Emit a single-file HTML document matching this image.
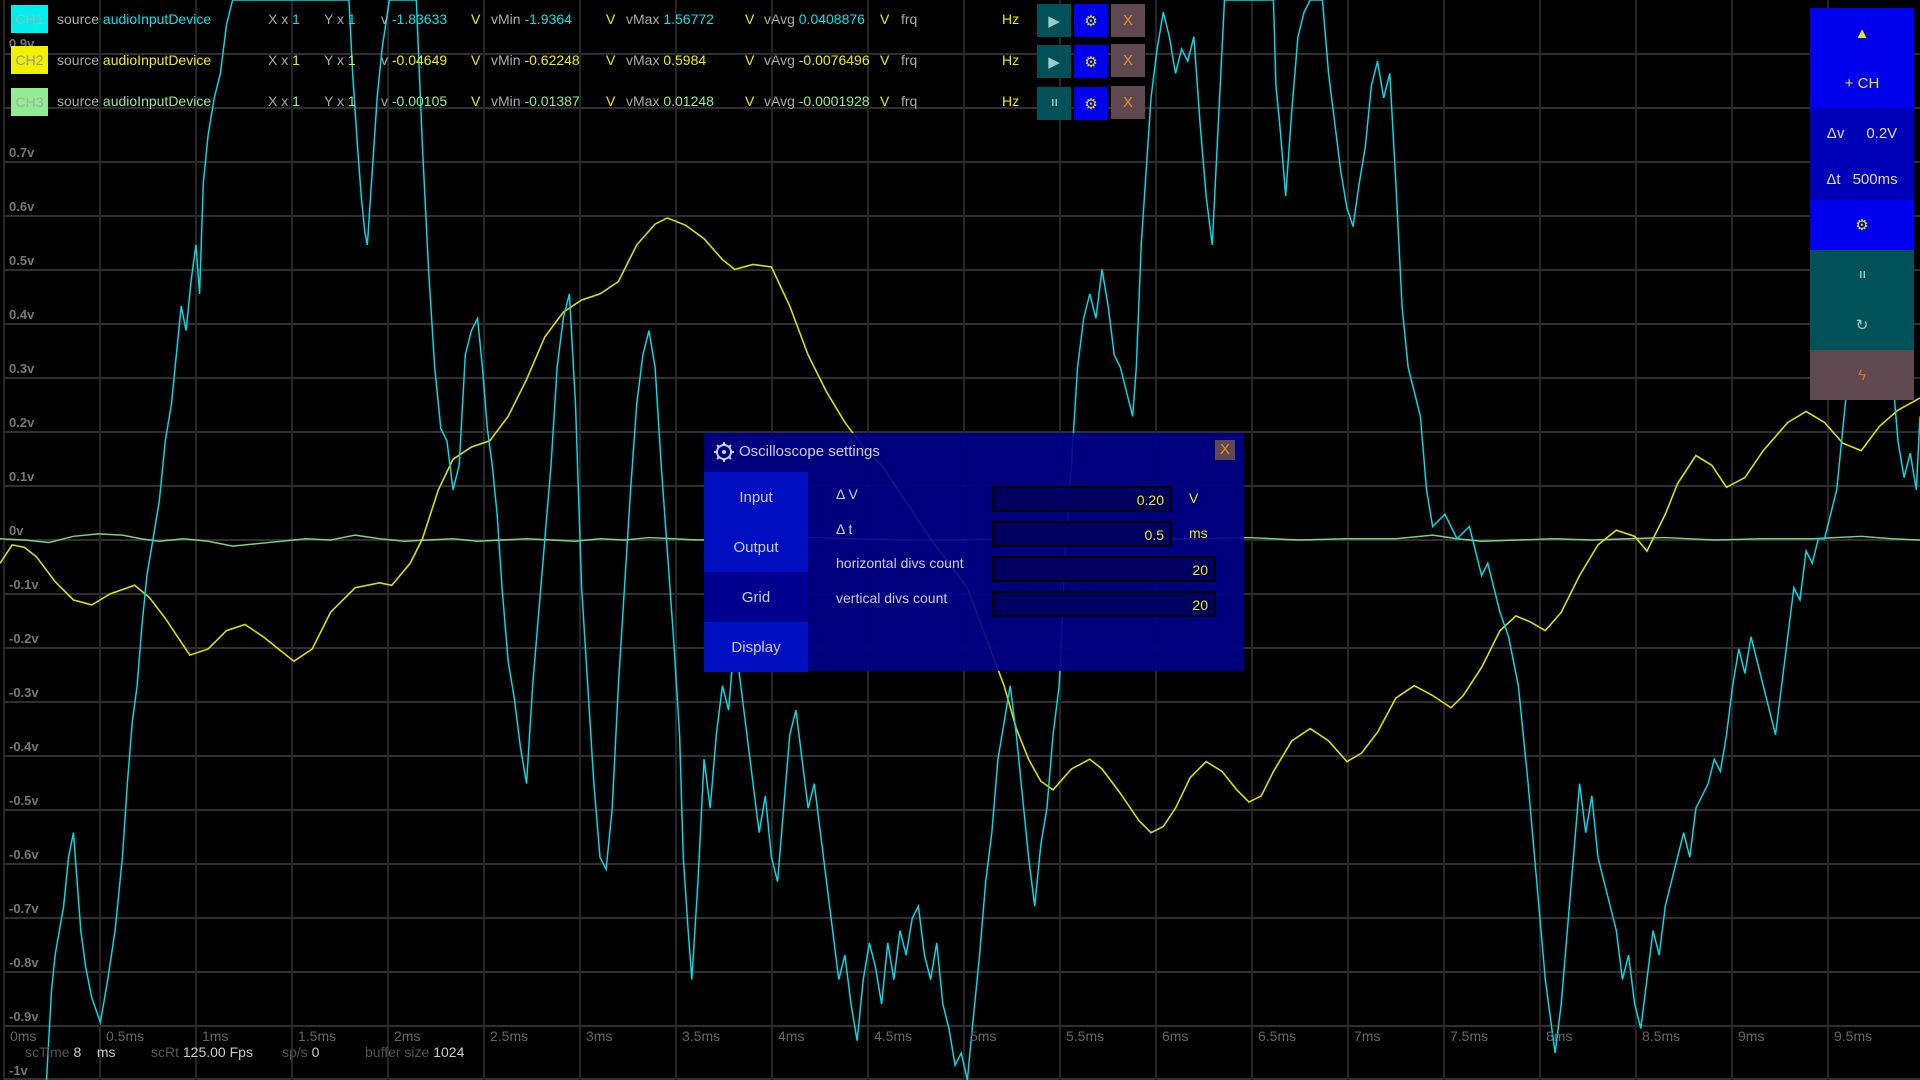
<!DOCTYPE html>
<html><head><meta charset="utf-8"><style>
*{margin:0;padding:0;box-sizing:border-box}
body{width:1920px;height:1080px;background:#000;overflow:hidden;position:relative;font-family:"Liberation Sans",sans-serif;color:#aaa}
.ab{position:absolute;white-space:nowrap}
.yl{position:absolute;left:9px;font-size:13px;font-weight:bold;color:#777}
.tl{position:absolute;top:1028px;font-size:14px;color:#666}
.hd{position:absolute;font-size:14px;color:#aaa;white-space:nowrap}
.c1{color:#00e5ee}.c2{color:#f0f000}.c3{color:#90ee90}.y{color:#f0f000}
.btn{position:absolute;width:34px;height:33px;display:flex;align-items:center;justify-content:center;font-size:15px}
.pl{background:#005258;color:#9cc}.gr{background:#0000ee;color:#e0e000}.xx{background:#604850;color:#e09020}
.ps{font-size:10px;font-weight:bold;letter-spacing:-1px}
.rp{position:absolute;left:1810px;width:104px;display:flex;align-items:center;justify-content:center;font-size:15px;color:#ddd}
.dlg{position:absolute;left:704px;top:433px;width:540px;height:238px;background:rgba(0,0,140,0.9)}
.tab{position:absolute;left:0;width:104px;height:50px;display:flex;align-items:center;justify-content:center;font-size:15px;color:#ccd}
.lab{position:absolute;left:132px;font-size:14px;color:#ccd}
.inp{position:absolute;left:288px;height:26px;background:#000060;border:2px solid #000;color:#f0f000;font-size:14px;text-align:right;padding:4px 6px}
</style></head><body>
<svg class="ab" style="left:0;top:0" width="1920" height="1080">
<g stroke="#303030" stroke-width="2">
<line x1="4" y1="54" x2="1920" y2="54"/><line x1="4" y1="108" x2="1920" y2="108"/><line x1="4" y1="162" x2="1920" y2="162"/><line x1="4" y1="216" x2="1920" y2="216"/><line x1="4" y1="270" x2="1920" y2="270"/><line x1="4" y1="324" x2="1920" y2="324"/><line x1="4" y1="378" x2="1920" y2="378"/><line x1="4" y1="432" x2="1920" y2="432"/><line x1="4" y1="486" x2="1920" y2="486"/><line x1="4" y1="540" x2="1920" y2="540"/><line x1="4" y1="594" x2="1920" y2="594"/><line x1="4" y1="648" x2="1920" y2="648"/><line x1="4" y1="702" x2="1920" y2="702"/><line x1="4" y1="756" x2="1920" y2="756"/><line x1="4" y1="810" x2="1920" y2="810"/><line x1="4" y1="864" x2="1920" y2="864"/><line x1="4" y1="918" x2="1920" y2="918"/><line x1="4" y1="972" x2="1920" y2="972"/><line x1="4" y1="1026" x2="1920" y2="1026"/><line x1="4" y1="1079" x2="1920" y2="1079"/>
</g>
<g stroke="#262626" stroke-width="2">
<line x1="4" y1="0" x2="4" y2="1080"/><line x1="100" y1="0" x2="100" y2="1080"/><line x1="196" y1="0" x2="196" y2="1080"/><line x1="292" y1="0" x2="292" y2="1080"/><line x1="388" y1="0" x2="388" y2="1080"/><line x1="484" y1="0" x2="484" y2="1080"/><line x1="580" y1="0" x2="580" y2="1080"/><line x1="676" y1="0" x2="676" y2="1080"/><line x1="772" y1="0" x2="772" y2="1080"/><line x1="868" y1="0" x2="868" y2="1080"/><line x1="964" y1="0" x2="964" y2="1080"/><line x1="1060" y1="0" x2="1060" y2="1080"/><line x1="1156" y1="0" x2="1156" y2="1080"/><line x1="1252" y1="0" x2="1252" y2="1080"/><line x1="1348" y1="0" x2="1348" y2="1080"/><line x1="1444" y1="0" x2="1444" y2="1080"/><line x1="1540" y1="0" x2="1540" y2="1080"/><line x1="1636" y1="0" x2="1636" y2="1080"/><line x1="1732" y1="0" x2="1732" y2="1080"/><line x1="1828" y1="0" x2="1828" y2="1080"/>
</g>
<svg x="0" y="0" width="1920" height="1080" viewBox="0 0 1568 882" preserveAspectRatio="none">
<polyline fill="none" stroke="#80d080" stroke-width="1.2" points="0,440 20,441 40,443 60,438 80,436 100,437 115,440 130,442 150,440 170,442 190,446 210,444 230,442 250,440 270,441 290,437 310,440 330,442 350,441 370,440 390,442 410,441 430,440 450,441 470,442 490,440 510,441 530,439 550,440 570,441 600,440 630,441 660,439 700,440 740,441 780,441 820,440 860,440 900,441 940,440 980,440 1020,439 1060,441 1100,440 1140,440 1170,437 1190,440 1210,442 1240,441 1270,440 1300,441 1330,440 1360,439 1400,441 1440,440 1480,440 1520,438 1545,440 1568,441"/>
<polyline fill="none" stroke="#e0e000" stroke-width="1.3" points="0,460 10,445 20,447 30,455 45,475 60,490 75,494 90,485 110,478 122,488 135,505 155,535 170,530 185,515 200,510 215,520 240,540 255,530 270,500 290,480 310,476 320,478 335,460 345,440 358,400 370,375 385,365 400,360 415,340 430,310 445,275 460,255 475,245 490,240 505,230 520,200 535,183 545,178 560,184 575,195 590,212 600,220 615,216 630,218 645,250 660,290 675,320 690,345 705,365 720,380 740,410 760,440 775,460 790,480 805,520 820,560 830,595 840,620 850,638 860,645 875,628 890,620 900,628 915,648 930,670 940,680 950,675 960,660 972,635 985,622 998,630 1010,645 1020,655 1030,650 1040,630 1055,605 1070,595 1085,605 1100,622 1112,615 1125,598 1140,570 1155,560 1170,568 1185,578 1195,568 1210,545 1225,515 1238,503 1250,508 1262,515 1275,500 1290,470 1305,445 1320,433 1335,438 1345,450 1360,420 1370,395 1385,372 1398,380 1410,398 1425,390 1440,368 1460,345 1475,336 1490,345 1505,362 1520,368 1535,348 1550,335 1568,325"/>
<polyline fill="none" stroke="#00dde8" stroke-width="1.2" points="38,882 42,810 45,780 52,740 56,700 60,680 63,720 66,760 70,790 75,815 82,835 88,800 94,760 100,700 104,640 108,590 112,560 116,510 120,470 125,440 130,410 135,360 140,330 145,280 148,250 152,270 156,230 160,200 163,240 166,150 170,110 175,80 180,60 185,20 190,0 200,0 260,0 285,0 288,60 292,120 295,160 298,190 300,200 304,140 308,80 312,40 318,0 340,0 345,120 350,220 355,300 360,350 365,360 370,400 375,380 380,290 385,270 390,260 394,300 398,350 402,380 406,420 410,480 415,540 420,570 425,610 430,640 435,560 440,500 445,440 450,380 455,300 460,260 465,240 470,330 475,480 480,560 485,640 490,700 495,710 500,660 505,560 510,480 515,400 520,330 525,290 530,270 535,300 540,380 545,450 550,520 555,600 558,700 562,760 565,800 570,720 575,620 580,660 585,600 590,560 595,580 600,520 605,560 610,600 615,640 620,680 625,650 630,700 635,720 640,660 645,600 650,580 655,620 660,660 665,640 670,680 675,720 680,760 685,800 690,780 695,820 700,850 705,800 710,770 715,790 720,820 725,770 730,800 735,760 740,780 745,750 750,740 755,780 760,800 765,770 770,820 775,840 780,870 785,860 790,882 795,830 800,780 805,720 810,680 815,620 820,590 825,560 830,600 835,650 840,700 845,740 850,690 855,660 860,600 865,560 870,450 875,380 880,300 885,260 890,240 895,260 900,220 905,250 910,290 915,300 920,320 925,340 928,300 932,200 936,140 940,80 945,40 950,10 955,30 960,60 965,40 970,50 975,30 980,100 985,160 990,200 995,100 1000,0 1040,0 1042,70 1045,100 1050,160 1055,90 1060,30 1065,10 1070,0 1080,0 1085,60 1090,100 1095,140 1100,170 1105,185 1110,150 1115,120 1120,70 1125,50 1130,80 1135,60 1140,150 1145,250 1150,300 1155,320 1160,340 1165,400 1170,430 1180,420 1190,440 1200,430 1210,470 1215,460 1225,500 1232,520 1240,560 1248,640 1255,720 1262,800 1270,860 1275,820 1280,760 1285,700 1290,640 1295,680 1300,650 1305,700 1310,720 1315,740 1320,760 1325,800 1330,780 1335,820 1340,840 1345,800 1350,760 1355,780 1360,740 1365,720 1370,700 1375,680 1380,700 1385,660 1390,650 1395,640 1400,620 1405,630 1410,600 1415,560 1420,530 1425,550 1430,520 1435,540 1440,560 1445,580 1450,600 1455,560 1460,520 1465,480 1470,490 1475,450 1480,460 1485,440 1490,440 1495,420 1500,400 1505,350 1510,300 1515,260 1520,230 1525,180 1530,165 1535,160 1540,220 1545,300 1550,360 1555,390 1560,370 1565,400 1568,340"/>
</svg>
</svg>

<div class="yl" style="top:36px">0.9v</div>
<div class="yl" style="top:145px">0.7v</div>
<div class="yl" style="top:199px">0.6v</div>
<div class="yl" style="top:253px">0.5v</div>
<div class="yl" style="top:307px">0.4v</div>
<div class="yl" style="top:361px">0.3v</div>
<div class="yl" style="top:415px">0.2v</div>
<div class="yl" style="top:469px">0.1v</div>
<div class="yl" style="top:523px">0v</div>
<div class="yl" style="top:577px">-0.1v</div>
<div class="yl" style="top:631px">-0.2v</div>
<div class="yl" style="top:685px">-0.3v</div>
<div class="yl" style="top:739px">-0.4v</div>
<div class="yl" style="top:793px">-0.5v</div>
<div class="yl" style="top:847px">-0.6v</div>
<div class="yl" style="top:901px">-0.7v</div>
<div class="yl" style="top:955px">-0.8v</div>
<div class="yl" style="top:1009px">-0.9v</div>
<div class="yl" style="top:1063px">-1v</div>

<div class="tl" style="left:10px">0ms</div><div class="tl" style="left:106px">0.5ms</div><div class="tl" style="left:202px">1ms</div><div class="tl" style="left:298px">1.5ms</div><div class="tl" style="left:394px">2ms</div><div class="tl" style="left:490px">2.5ms</div><div class="tl" style="left:586px">3ms</div><div class="tl" style="left:682px">3.5ms</div><div class="tl" style="left:778px">4ms</div><div class="tl" style="left:874px">4.5ms</div><div class="tl" style="left:970px">5ms</div><div class="tl" style="left:1066px">5.5ms</div><div class="tl" style="left:1162px">6ms</div><div class="tl" style="left:1258px">6.5ms</div><div class="tl" style="left:1354px">7ms</div><div class="tl" style="left:1450px">7.5ms</div><div class="tl" style="left:1546px">8ms</div><div class="tl" style="left:1642px">8.5ms</div><div class="tl" style="left:1738px">9ms</div><div class="tl" style="left:1834px">9.5ms</div>

<div class="ab" style="left:25px;top:1044px;font-size:14px;color:#555">scTime <span style="color:#ccc">8</span>&nbsp;&nbsp;&nbsp;&nbsp;<span style="color:#ccc">ms</span></div>
<div class="ab" style="left:151px;top:1044px;font-size:14px;color:#555">scRt <span style="color:#ccc">125.00 Fps</span></div>
<div class="ab" style="left:282px;top:1044px;font-size:14px;color:#555">sp/s <span style="color:#ccc">0</span></div>
<div class="ab" style="left:365px;top:1044px;font-size:14px;color:#555">buffer size <span style="color:#ccc">1024</span></div>

<div class="ab" style="left:11px;top:5px;width:37px;height:28px;background:#00eeee;color:#99bbbb;font-size:14px;display:flex;align-items:center;justify-content:center">CH1</div>
<div class="ab" style="left:11px;top:46px;width:37px;height:28px;background:#f0f000;color:#999;font-size:14px;display:flex;align-items:center;justify-content:center">CH2</div>
<div class="ab" style="left:11px;top:88px;width:37px;height:28px;background:#90ee90;color:#aaa;font-size:14px;display:flex;align-items:center;justify-content:center">CH3</div>

<div class="hd" style="left:57px;top:11px">source <span class="c1">audioInputDevice</span></div>
<div class="hd" style="left:268px;top:11px">X x <span class="c1">1</span></div>
<div class="hd" style="left:324px;top:11px">Y x <span class="c1">1</span></div>
<div class="hd" style="left:381px;top:11px">v <span class="c1">-1.83633</span></div>
<div class="hd y" style="left:471px;top:11px">V</div>
<div class="hd" style="left:491px;top:11px">vMin <span class="c1">-1.9364</span></div>
<div class="hd y" style="left:606px;top:11px">V</div>
<div class="hd" style="left:626px;top:11px">vMax <span class="c1">1.56772</span></div>
<div class="hd y" style="left:745px;top:11px">V</div>
<div class="hd" style="left:764px;top:11px">vAvg <span class="c1">0.0408876</span></div>
<div class="hd y" style="left:880px;top:11px">V</div>
<div class="hd" style="left:901px;top:11px">frq</div>
<div class="hd y" style="left:1002px;top:11px">Hz</div>

<div class="hd" style="left:57px;top:52px">source <span class="c2">audioInputDevice</span></div>
<div class="hd" style="left:268px;top:52px">X x <span class="c2">1</span></div>
<div class="hd" style="left:324px;top:52px">Y x <span class="c2">1</span></div>
<div class="hd" style="left:381px;top:52px">v <span class="c2">-0.04649</span></div>
<div class="hd y" style="left:471px;top:52px">V</div>
<div class="hd" style="left:491px;top:52px">vMin <span class="c2">-0.62248</span></div>
<div class="hd y" style="left:606px;top:52px">V</div>
<div class="hd" style="left:626px;top:52px">vMax <span class="c2">0.5984</span></div>
<div class="hd y" style="left:745px;top:52px">V</div>
<div class="hd" style="left:764px;top:52px">vAvg <span class="c2">-0.0076496</span></div>
<div class="hd y" style="left:880px;top:52px">V</div>
<div class="hd" style="left:901px;top:52px">frq</div>
<div class="hd y" style="left:1002px;top:52px">Hz</div>

<div class="hd" style="left:57px;top:93px">source <span class="c3">audioInputDevice</span></div>
<div class="hd" style="left:268px;top:93px">X x <span class="c3">1</span></div>
<div class="hd" style="left:324px;top:93px">Y x <span class="c3">1</span></div>
<div class="hd" style="left:381px;top:93px">v <span class="c3">-0.00105</span></div>
<div class="hd y" style="left:471px;top:93px">V</div>
<div class="hd" style="left:491px;top:93px">vMin <span class="c3">-0.01387</span></div>
<div class="hd y" style="left:606px;top:93px">V</div>
<div class="hd" style="left:626px;top:93px">vMax <span class="c3">0.01248</span></div>
<div class="hd y" style="left:745px;top:93px">V</div>
<div class="hd" style="left:764px;top:93px">vAvg <span class="c3">-0.0001928</span></div>
<div class="hd y" style="left:880px;top:93px">V</div>
<div class="hd" style="left:901px;top:93px">frq</div>
<div class="hd y" style="left:1002px;top:93px">Hz</div>

<div class="btn pl" style="left:1037px;top:4px">▶</div><div class="btn gr" style="left:1074px;top:4px">⚙</div><div class="btn xx" style="left:1111px;top:4px">X</div>
<div class="btn pl" style="left:1037px;top:45px">▶</div><div class="btn gr" style="left:1074px;top:45px">⚙</div><div class="btn xx" style="left:1111px;top:44px">X</div>
<div class="btn pl" style="left:1037px;top:87px"><span class="ps">I I</span></div><div class="btn gr" style="left:1074px;top:87px">⚙</div><div class="btn xx" style="left:1111px;top:86px">X</div>

<div class="rp" style="top:8px;height:50px;background:#0000ee;color:#e8e800">▲</div>
<div class="rp" style="top:58px;height:50px;background:#0000ee;color:#e8e800">+ CH</div>
<div class="rp" style="top:108px;height:50px;background:#0000b8"><span style="margin-right:22px">Δv</span>0.2V</div>
<div class="rp" style="top:158px;height:42px;background:#0000b8"><span style="margin-right:12px">Δt</span>500ms</div>
<div class="rp" style="top:200px;height:50px;background:#0000ee;color:#e8e800">⚙</div>
<div class="rp" style="top:250px;height:50px;background:#005258;color:#9cc"><span class="ps">I I</span></div>
<div class="rp" style="top:300px;height:50px;background:#005258;color:#9cc">↻</div>
<div class="rp" style="top:350px;height:50px;background:#604850;color:#e07030">ϟ</div>

<div class="dlg">
<svg class="ab" style="left:10px;top:9px" width="20" height="20" viewBox="0 0 20 20"><circle cx="10" cy="10" r="7" fill="none" stroke="#ccd" stroke-width="2"/><circle cx="10" cy="10" r="2" fill="#ccd"/><g stroke="#ccd" stroke-width="2"><line x1="10" y1="0" x2="10" y2="3"/><line x1="10" y1="17" x2="10" y2="20"/><line x1="0" y1="10" x2="3" y2="10"/><line x1="17" y1="10" x2="20" y2="10"/><line x1="3" y1="3" x2="5" y2="5"/><line x1="15" y1="15" x2="17" y2="17"/><line x1="17" y1="3" x2="15" y2="5"/><line x1="3" y1="17" x2="5" y2="15"/></g></svg>
<div class="ab" style="left:35px;top:10px;font-size:15px;color:#ccd">Oscilloscope settings</div>
<div class="ab" style="left:511px;top:7px;width:20px;height:20px;background:#604850;color:#e09020;font-size:15px;text-align:center;line-height:20px">X</div>
<div class="tab" style="top:39px;background:#0010c0">Input</div>
<div class="tab" style="top:89px;background:#0010c0">Output</div>
<div class="tab" style="top:139px;background:#000090">Grid</div>
<div class="tab" style="top:189px;background:#0010c0">Display</div>
<div class="lab" style="top:53px">Δ V</div>
<div class="lab" style="top:88px">Δ t</div>
<div class="lab" style="top:122px">horizontal divs count</div>
<div class="lab" style="top:157px">vertical divs count</div>
<div class="inp" style="top:53px;width:180px">0.20</div>
<div class="inp" style="top:88px;width:180px">0.5</div>
<div class="inp" style="top:123px;width:224px">20</div>
<div class="inp" style="top:158px;width:224px">20</div>
<div class="ab y" style="left:485px;top:57px;font-size:14px">V</div>
<div class="ab y" style="left:485px;top:92px;font-size:14px">ms</div>
</div>
</body></html>
